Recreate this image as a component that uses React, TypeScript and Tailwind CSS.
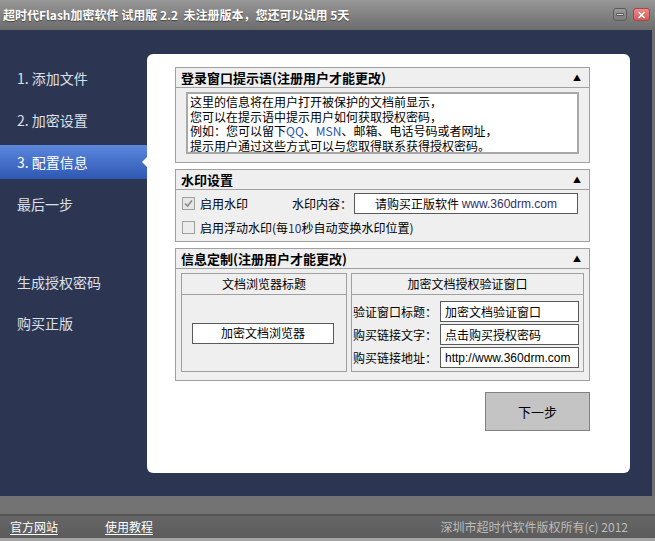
import { useState } from "react";

const FONT = {
  fontFamily: '"Noto Sans CJK SC", "Liberation Sans", sans-serif',
};

const NAV = [
  { label: "1. 添加文件", gap: "mt-0" },
  { label: "2. 加密设置", gap: "mt-[8px]" },
  { label: "3. 配置信息", gap: "mt-[8px]" },
  { label: "最后一步", gap: "mt-[8px]" },
  { label: "生成授权密码", gap: "mt-[44px]" },
  { label: "购买正版", gap: "mt-[7px]" },
];

function SectionHeader({ title }: { title: React.ReactNode }) {
  return (
    <div className="flex h-[20px] items-center justify-between border-b border-[#a0a0a0] pl-[5px] pr-[8px]">
      <span className="text-[13px] font-bold leading-none text-black">{title}</span>
      <span className="text-[8px] leading-none text-black">▲</span>
    </div>
  );
}

function TextBox({ value, className }: { value: React.ReactNode; className: string }) {
  return (
    <div
      className={`flex h-[21px] items-center border border-[#5a5a5a] bg-white text-[12px] leading-none text-black ${className}`}
    >
      {value}
    </div>
  );
}

export default function App() {
  const [active] = useState(2);

  return (
    <div className="flex h-[541px] w-[655px] flex-col overflow-hidden select-none" style={FONT}>
      {/* title bar */}
      <div className="flex h-[30px] shrink-0 items-center justify-between bg-gradient-to-b from-[#979797] via-[#828282] to-[#6c6c6c] pl-[3px] pr-[5px]">
        <span className="text-[12px] font-bold leading-none text-white [text-shadow:0_1px_1px_rgba(0,0,0,0.45)]">
          超时代Flash加密软件 试用版 2.2&nbsp;&nbsp;未注册版本，您还可以试用 5天
        </span>
        <div className="flex items-center gap-[6px] pb-[2px]">
          <div className="grid h-[13px] w-[14px] place-items-center rounded-[3px] border border-[#5c5c5c] bg-gradient-to-b from-[#9a9a9a] to-[#7a7a7a]">
            <div className="h-[3px] w-[8px] rounded-[1px] border border-[#555] bg-[#d8d8d8]" />
          </div>
          <div className="grid h-[13px] w-[17px] place-items-center rounded-[3px] border border-[#a84545] bg-gradient-to-b from-[#f08a8a] to-[#d85a5a]">
            <span className="text-[11px] font-bold leading-none text-white [text-shadow:0_0_1px_#802020]">✕</span>
          </div>
        </div>
      </div>

      {/* body */}
      <div className="flex h-[466px] shrink-0 border-r-[3px] border-[#6e6e6e] bg-[#2c3653]">
        <nav className="w-[147px] shrink-0 pt-[31px]">
          {NAV.map((item, i) => (
            <div
              key={item.label}
              className={`relative flex h-[34px] items-center pl-[17px] text-[14px] leading-none ${item.gap} ${
                i === active
                  ? "bg-gradient-to-b from-[#5d88de] to-[#2e58b2] text-white"
                  : "text-[#dde0e8]"
              }`}
            >
              {item.label}
              {i === active && (
                <span className="absolute right-0 top-1/2 h-0 w-0 -translate-y-1/2 border-y-[5px] border-r-[5px] border-y-transparent border-r-white" />
              )}
            </div>
          ))}
        </nav>

        <div className="pt-[24px]">
          <div className="flex h-[419px] w-[483px] flex-col rounded-[6px] bg-white pl-[28px] pr-[40px] pt-[13px]">
            {/* section 1 */}
            <div className="h-[96px] border border-[#a0a0a0] bg-[#efefef]">
              <SectionHeader title="登录窗口提示语(注册用户才能更改)" />
              <div className="px-[10px] pt-[4px]">
                <div className="h-[62px] border-2 border-[#a8a8a8] bg-white pl-[2px] pt-[1px] text-[12px] leading-[14.5px] text-black">
                  <p className="h-[14.5px]">这里的信息将在用户打开被保护的文档前显示，</p>
                  <p className="h-[14.5px]">您可以在提示语中提示用户如何获取授权密码，</p>
                  <p className="flex h-[14.5px]">
                    例如：您可以留下<span className="text-[#2c55b0]">QQ</span>、
                    <span className="text-[#2c55b0]">MSN</span>、邮箱、电话号码或者网址，
                  </p>
                  <p className="h-[14.5px]">提示用户通过这些方式可以与您取得联系获得授权密码。</p>
                </div>
              </div>
            </div>

            {/* section 2 */}
            <div className="mt-[6px] h-[73px] border border-[#a0a0a0] bg-[#efefef]">
              <SectionHeader title="水印设置" />
              <div className="pl-[6px] pr-[11px] pt-[3px]">
                <div className="flex h-[21px] items-center text-[12px] leading-none text-black">
                  <div className="grid h-[13px] w-[13px] place-items-center border border-[#a0a0a0] bg-[#e6e6e6]">
                    <svg width="9" height="9" viewBox="0 0 9 9">
                      <path d="M1 4.5 L3.5 7 L8 1.5" fill="none" stroke="#8a8a8a" strokeWidth="1.6" />
                    </svg>
                  </div>
                  <span className="ml-[5px]">启用水印</span>
                  <span className="ml-[44px]">水印内容：</span>
                  <TextBox
                    className="ml-auto w-[224px] justify-center"
                    value={
                      <>
                        请购买正版软件&nbsp;
                        <span className="text-[#30306a]" style={{ fontFamily: '"Liberation Sans", sans-serif' }}>
                          www.360drm.com
                        </span>
                      </>
                    }
                  />
                </div>
                <div className="mt-[3px] flex h-[21px] items-center text-[12px] leading-none text-black">
                  <div className="h-[13px] w-[13px] border border-[#a0a0a0] bg-[#ececec]" />
                  <span className="ml-[5px]">
                    启用浮动水印(每<span className="text-[#30306a]">10</span>秒自动变换水印位置)
                  </span>
                </div>
              </div>
            </div>

            {/* section 3 */}
            <div className="mt-[6px] h-[133px] border border-[#a0a0a0] bg-[#efefef]">
              <SectionHeader title="信息定制(注册用户才能更改)" />
              <div className="flex gap-[4px] pl-[5px] pt-[4px]">
                <div className="flex h-[99px] w-[166px] flex-col border border-[#a0a0a0]">
                  <div className="flex h-[21px] items-center justify-center border-b border-[#a0a0a0] text-[12px] leading-none text-black">
                    文档浏览器标题
                  </div>
                  <div className="flex flex-1 items-center pl-[10px]">
                    <TextBox className="w-[142px] justify-center" value="加密文档浏览器" />
                  </div>
                </div>
                <div className="flex h-[99px] w-[233px] flex-col border border-[#a0a0a0]">
                  <div className="flex h-[21px] items-center justify-center border-b border-[#a0a0a0] text-[12px] leading-none text-black">
                    加密文档授权验证窗口
                  </div>
                  <div className="flex flex-col gap-[2px] pl-[1px] pr-[4px] pt-[6px]">
                    {[
                      ["验证窗口标题：", "加密文档验证窗口"],
                      ["购买链接文字：", "点击购买授权密码"],
                      ["购买链接地址：", "http://www.360drm.com"],
                    ].map(([label, value]) => (
                      <div key={label} className="flex items-center">
                        <span className="w-[87px] text-[12px] leading-none text-black">{label}</span>
                        <TextBox
                          className="w-[139px] pl-[4px]"
                          value={
                            value.startsWith("http") ? (
                              <span style={{ fontFamily: '"Liberation Sans", sans-serif' }}>{value}</span>
                            ) : (
                              value
                            )
                          }
                        />
                      </div>
                    ))}
                  </div>
                </div>
              </div>
            </div>

            <div className="mt-[11px] flex justify-end">
              <button
                type="button"
                className="h-[39px] w-[105px] border border-[#808080] bg-[#c4c4c4] text-[13px] leading-none text-black"
              >
                下一步
              </button>
            </div>
          </div>
        </div>
      </div>

      {/* footer */}
      <div className="flex h-[45px] shrink-0 flex-col">
        <div className="h-[18px] bg-[#737373]" />
        <div className="h-[2px] bg-[#555555]" />
        <div className="flex h-[22px] items-center bg-gradient-to-b from-[#666666] to-[#5c5c5c] pl-[10px] pr-[27px] text-[12px] leading-none">
          <a className="text-white underline underline-offset-2">官方网站</a>
          <a className="ml-[47px] text-white underline underline-offset-2">使用教程</a>
          <span className="ml-auto text-[#bdbdbd]">深圳市超时代软件版权所有(c) 2012</span>
        </div>
        <div className="h-[3px] bg-[#a3a3a3]" />
      </div>
    </div>
  );
}
